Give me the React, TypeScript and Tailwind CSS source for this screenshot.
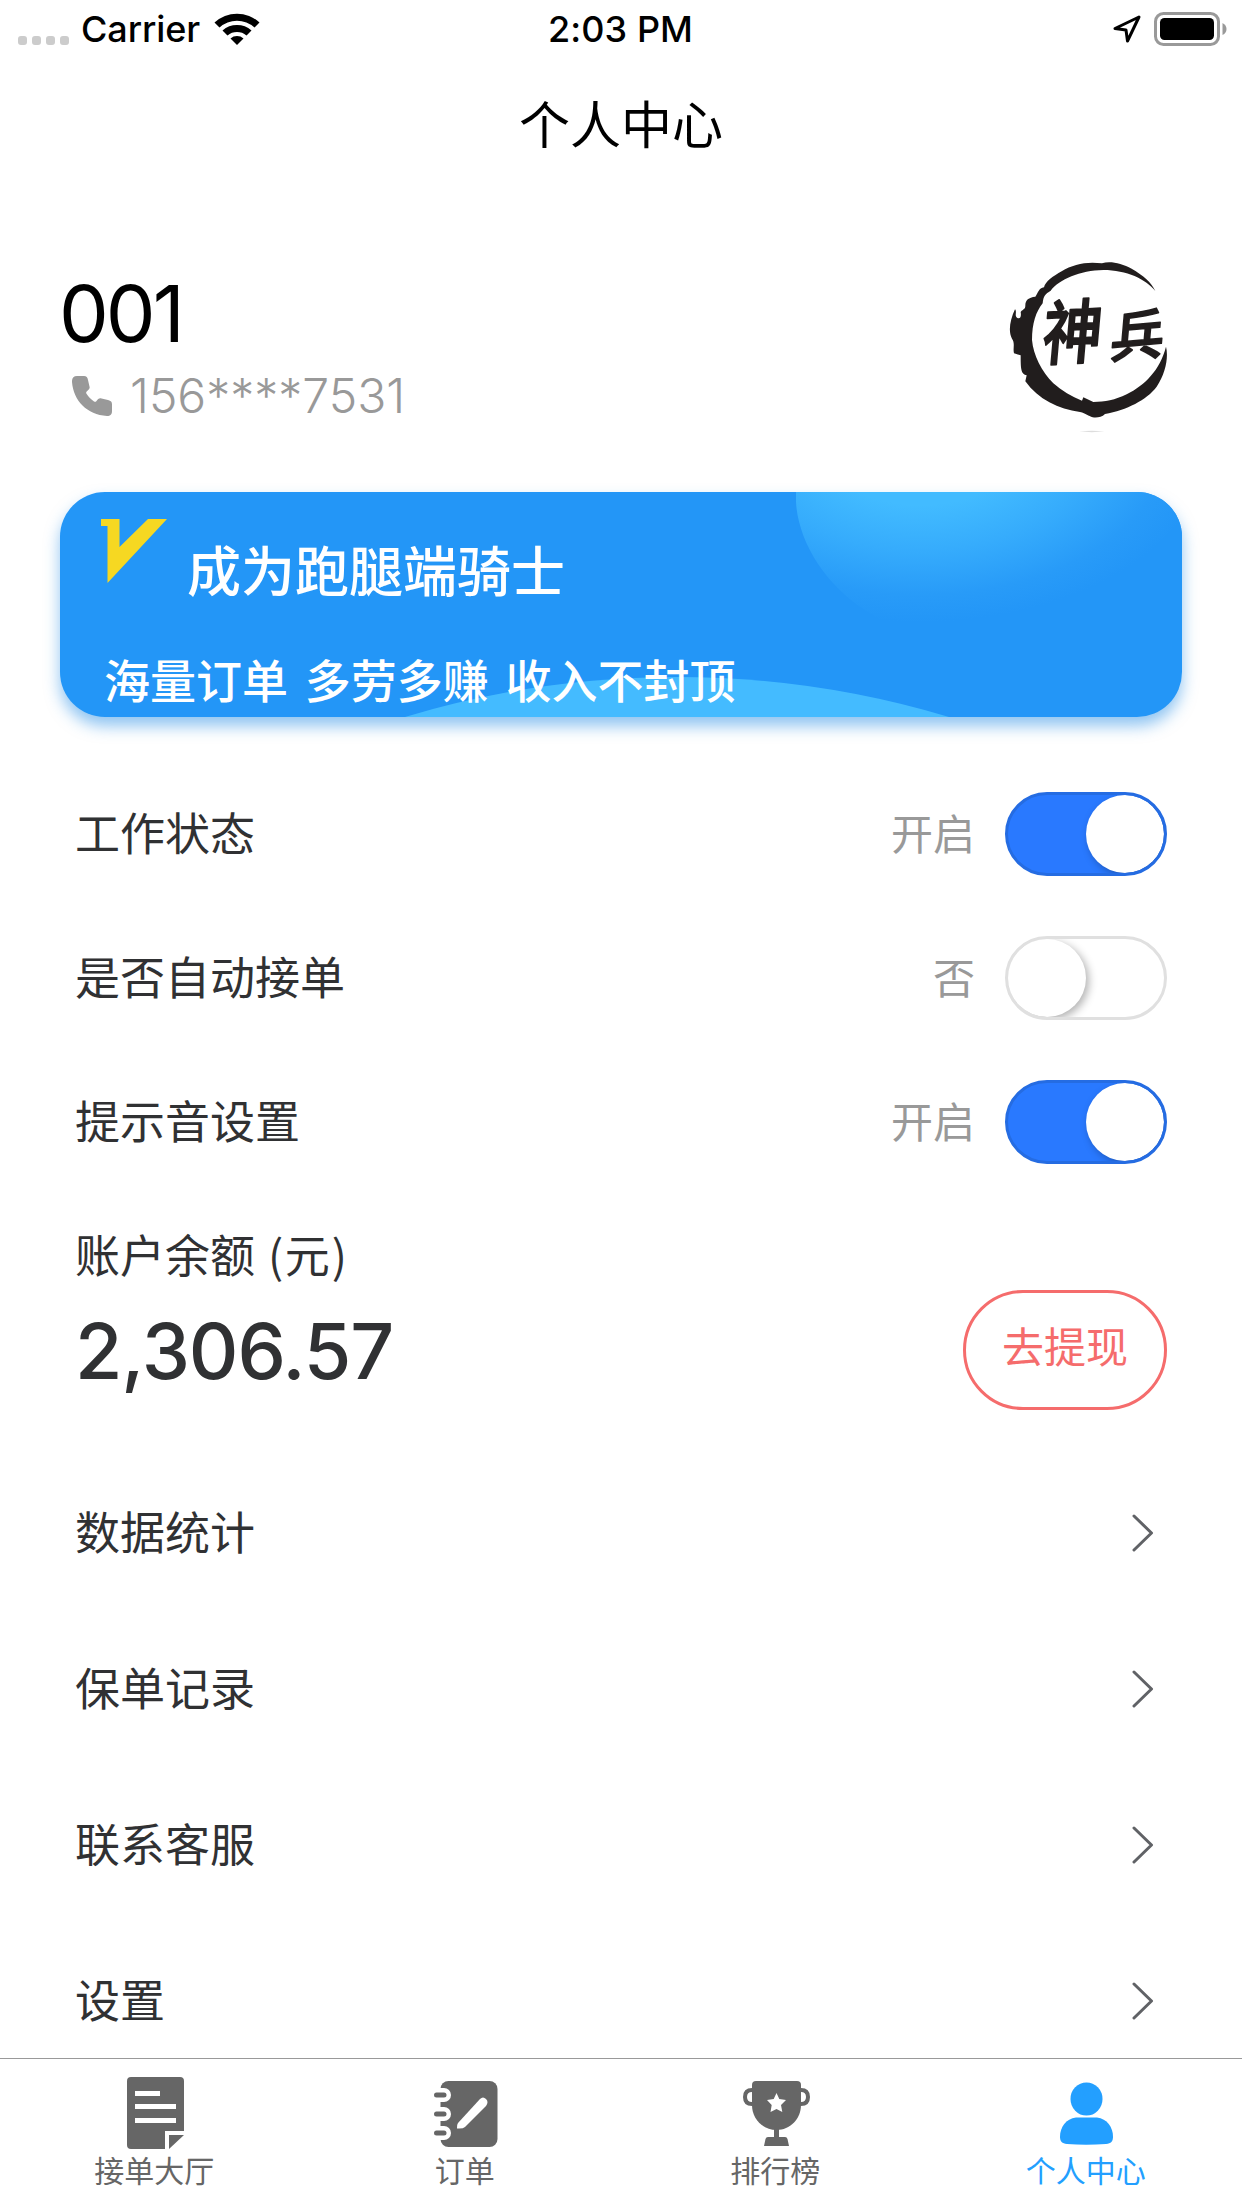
import React, { useState } from 'react';

const menuItems = ['数据统计', '保单记录', '联系客服', '设置'];

// Status bar icons
function WifiIcon() {
  return (
    <svg className="ml-[14px] h-[34px] w-[46px]" viewBox="0 0 46 34">
      <path d="M0.5 10.5 A33 33 0 0 1 45.5 10.5 L40.5 15.5 A26 26 0 0 0 5.5 15.5 Z" />
      <path d="M8.5 18.5 A22 22 0 0 1 37.5 18.5 L32.5 23.5 A15 15 0 0 0 13.5 23.5 Z" />
      <path d="M16.5 26.5 A10 10 0 0 1 29.5 26.5 L23 33 Z" />
    </svg>
  );
}

function StatusBar() {
  return (
    <div className="grid h-[58px] shrink-0 grid-cols-3 items-center pl-[18px] pr-[15px] text-[36px] font-medium leading-none text-black">
      <div className="flex items-center">
        <div className="mt-[23px] flex gap-[5px]">
          {[0, 1, 2, 3].map((i) => (
            <span key={i} className="h-[9px] w-[9px] rounded-[3px] bg-[#cccccc]" />
          ))}
        </div>
        <span className="ml-[12px] tracking-[-0.1px]">Carrier</span>
        <WifiIcon />
      </div>
      <div className="pr-[4px] text-center tracking-[0.1px]">2:03 PM</div>
      <div className="flex items-center justify-end gap-[12px]">
        <svg className="h-[30px] w-[30px]" viewBox="0 0 30 30" fill="none" stroke="#000" strokeWidth="3" strokeLinejoin="round">
          <path d="M27 3 L3 14.5 L14 16 L15.5 27 Z" />
        </svg>
        <svg className="h-[34px] w-[73px]" viewBox="0 0 73 34">
          <rect x="1.5" y="1.5" width="63" height="31" rx="8" fill="none" stroke="#999" strokeWidth="3" />
          <rect x="6" y="6" width="54" height="22" rx="4.5" fill="#000" />
          <path d="M68.5 11 Q72.5 13 72.5 17 Q72.5 21 68.5 23 Z" fill="#999" />
        </svg>
      </div>
    </div>
  );
}

function Avatar() {
  return (
    <svg className="h-[180px] w-[180px]" viewBox="60 45 540 540">
      <path
        fill="#211d1d"
        d="M526 153 C498 118 440 90 370 90 C300 91 238 118 212 152 C196 162 190 168 188 190 C168 215 156 250 156 300 C160 345 185 395 220 430 C245 452 275 470 306 482 L310 472 L340 486 C375 486 405 480 440 463 C495 435 540 390 558 320 C566 350 557 400 530 440 C500 480 440 510 375 522 C365 532 350 534 338 532 C325 528 318 520 300 516 C235 508 175 478 136 424 L140 406 C124 402 122 392 122 346 L102 340 C98 325 106 310 96 296 C84 275 90 240 105 208 C112 215 102 228 112 234 C122 238 124 228 122 216 C130 206 136 210 136 196 C136 180 146 172 166 170 C174 160 176 144 192 142 C196 124 220 108 245 94 C280 72 320 64 366 70 C390 62 425 70 455 86 C490 106 515 128 526 153 Z"
      />
      <g
        fill="#211d1d"
        stroke="#211d1d"
        strokeWidth="5"
        strokeLinejoin="round"
        fontFamily='"Noto Sans CJK SC", sans-serif'
        fontWeight="500"
        textAnchor="middle"
      >
        <text transform="translate(272 354) rotate(-3) skewX(-8) scale(1 1.17)" fontSize="178">神</text>
        <text transform="translate(468 347) rotate(-5) skewX(-10)" fontSize="162">兵</text>
      </g>
      <path d="M298 574 Q335 570 374 574 Q335 579 298 574 Z" fill="#ddd" />
    </svg>
  );
}

function Profile() {
  return (
    <div className="flex h-[302px] shrink-0 justify-between pl-[60px] pr-[62px]">
      <div className="pt-[78px]">
        <div className="-ml-px text-[79px] leading-[90px] tracking-[-3px] text-black">001</div>
        <div className="mt-[7px] flex items-center pl-[12px] text-[#999999]">
          <svg className="h-[40px] w-[40px]" viewBox="0 0 40 40" fill="currentColor">
            <path d="M5 0 H12 C14.5 0 15.5 1.5 16 4 L17.6 11 C18 13 16.500 14 14.5 15.700 C14 16.200 14 17 14.500 17.800 C16.500 21 19 23.500 22 25.500 C23 26 23.600 26 24.300 25.300 C26 23 27 22 29.500 22.500 L36 24 C39 24.700 40 26 40 28.500 V35 C40 38.500 38.500 40 35 40 C15 38.500 1.500 25 0 6 C-0.200 2 1.500 0 5 0 Z" />
          </svg>
          <span className="ml-[18px] pt-px text-[48px] font-light leading-[60px]">156****7531</span>
        </div>
      </div>
      <div className="pt-[65px]">
        <Avatar />
      </div>
    </div>
  );
}

function RiderBanner() {
  return (
    <div className="relative mx-[60px] h-[225px] shrink-0 rounded-[45px] bg-[#2396f7] text-white shadow-[0_9px_15px_rgba(34,139,230,0.5)]">
      <svg className="absolute inset-0 h-full w-full rounded-[45px]" viewBox="0 0 1122 225">
        <defs>
          <radialGradient id="glow" gradientUnits="userSpaceOnUse" cx="0" cy="0" r="1" gradientTransform="translate(860 -50) scale(290 180)">
            <stop offset="0.35" stopColor="#42bbff" />
            <stop offset="0.6" stopColor="#36acfc" />
            <stop offset="0.85" stopColor="#289bf8" />
            <stop offset="1" stopColor="#2396f7" />
          </radialGradient>
        </defs>
        <path d="M736 0 V10 C738 48 764 92 805 118 Q840 142 890 150 H1122 V0 Z" fill="url(#glow)" />
        <path d="M345 225 A945 945 0 0 1 889 225 Z" fill="#44bbff" />
      </svg>
      <div className="relative flex pl-[41px] pt-[27px]">
        <svg className="h-[64px] w-[66px]" viewBox="0 0 66 64">
          <path d="M0 0 H18.500 V28 L47 0 H66 L6.500 64 V7 H0 Z" fill="#f6d822" />
        </svg>
        <div className="ml-[20px] mt-[20px] text-[54px] font-medium leading-[68px]">成为跑腿端骑士</div>
      </div>
      <div className="relative pl-[44px] pt-[44px] text-[46px] font-medium leading-[60px] [word-spacing:4.5px]">
        海量订单 多劳多赚 收入不封顶
      </div>
    </div>
  );
}

interface SwitchRowProps {
  label: string;
  onText: string;
  offText: string;
  initial: boolean;
}

function SwitchRow({ label, onText, offText, initial }: SwitchRowProps) {
  const [checked, setChecked] = useState<boolean>(initial);

  return (
    <div className="flex h-[144px] shrink-0 items-center pl-[75px] pr-[75px]">
      <span className="flex-1 pt-px text-[45px] text-[#303133]">{label}</span>
      <span className="mr-[30px] text-[42px] text-[#999999]">{checked ? onText : offText}</span>
      <button
        onClick={() => setChecked(!checked)}
        className={`flex h-[84px] w-[162px] overflow-hidden rounded-full border-[3px] ${
          checked ? 'justify-end border-[#256ce2] bg-[#2979ff]' : 'justify-start border-[#e0e0e0] bg-white'
        }`}
      >
        <span className="h-[78px] w-[78px] rounded-full bg-white shadow-[3px_3px_8px_rgba(0,0,0,0.3)]" />
      </button>
    </div>
  );
}

function Balance() {
  return (
    <div className="flex h-[261px] shrink-0 items-start justify-between px-[75px] pt-[32px] text-[#303133]">
      <div>
        <div className="font-['Noto_Sans_CJK_SC',sans-serif] text-[45px] leading-[56px] [word-spacing:3px]">
          账户余额 <span className="mr-[1.5px]">(</span>元<span className="ml-[2px]">)</span>
        </div>
        <div className="mt-[24px] text-[77px] font-medium leading-[90px] tracking-[-1.1px]">2,306.57</div>
      </div>
      <button className="mt-[64px] h-[120px] w-[204px] rounded-full border-[3px] border-[#f56c6c] pb-[4px] text-[42px] leading-none text-[#f56c6c]">
        去提现
      </button>
    </div>
  );
}

function MenuRow({ label }: { label: string }) {
  return (
    <div className="flex h-[156px] shrink-0 items-center justify-between pl-[75px] pr-[88px] text-[45px] text-[#303133]">
      <span className="pt-px">{label}</span>
      <svg className="h-[40px] w-[22px]" viewBox="0 0 22 40" fill="none" stroke="#606266" strokeWidth="3" strokeLinecap="round" strokeLinejoin="round">
        <path d="M2 3 L19.500 20 L2 37" />
      </svg>
    </div>
  );
}

// Tab icons
function HallIcon() {
  return (
    <svg className="h-[72px] w-[57px]" viewBox="0 0 57 72" fill="currentColor">
      <path d="M4 0 H53 Q57 0 57 4 V54 H38 V72 H4 Q0 72 0 68 V4 Q0 0 4 0 Z M8 14 V19 H33 V14 Z M8 27 V32 H49 V27 Z M8 41 V46 H49 V41 Z" fillRule="evenodd" />
      <path d="M42 58 H57 L42 72 Z" />
    </svg>
  );
}

function OrderIcon() {
  return (
    <svg className="h-[72px] w-[64px]" viewBox="0 -4 64 72">
      <rect x="6.500" y="0" width="57" height="66" rx="8" fill="currentColor" />
      {[14, 33, 52].map((y) => (
        <g key={y}>
          <rect x="-4" y={y - 7} width="21" height="14" rx="7" fill="#fff" />
          <rect x="0" y={y - 2.5} width="12.500" height="5" rx="2.500" fill="currentColor" />
        </g>
      ))}
      <path d="M24 42 L46 18 Q49 15 52 18 Q55 21 52 25 L31 46 Q29 48 23 47.500 Q22.500 44 24 42 Z" fill="#fff" />
    </svg>
  );
}

function TrophyIcon() {
  return (
    <svg className="h-[72px] w-[67px]" viewBox="0 -4 67 72" fill="currentColor">
      <path d="M13 0 H54 Q58 0 58 4 V24 C58 38 47 49 33.500 49 C20 49 9 38 9 24 V4 Q9 0 13 0 Z" />
      <path d="M10 9 H9 Q2 9 2 16 Q2 23 9 23 H10 M57 9 H58 Q65 9 65 16 Q65 23 58 23 H57" fill="none" stroke="currentColor" strokeWidth="4" />
      <path d="M31 47 H36 V56 H42 Q44 56 44.500 58 L46 65 H21 L22.500 58 Q23 56 25 56 H31 Z" />
      <path d="M33.500 12 L36.300 18 L43 19 L38 24 L39.300 31 L33.500 28 L27.500 31 L28.700 24 L24 19 L30.700 18 Z" fill="#fff" />
    </svg>
  );
}

function UserIcon() {
  return (
    <svg className="h-[72px] w-[53px]" viewBox="0 -5.500 53 72" fill="currentColor">
      <ellipse cx="26.500" cy="16.500" rx="16" ry="16.500" />
      <path d="M16 35 H37 C47 36 53 45 53 54 C53 59 51 61 46 61.500 Q26 63 7 61.500 C2 61 0 59 0 54 C0 45 6 36 16 35 Z" />
    </svg>
  );
}

const tabs = [
  { label: '接单大厅', icon: <HallIcon /> },
  { label: '订单', icon: <OrderIcon /> },
  { label: '排行榜', icon: <TrophyIcon /> },
  { label: '个人中心', icon: <UserIcon /> },
];

function App() {
  const [active, setActive] = useState<number>(3);

  return (
    <div className="flex h-[2208px] w-[1242px] flex-col overflow-hidden bg-white font-['Inter','Noto_Sans_CJK_SC',sans-serif]">
      <StatusBar />

      {/* Main Content */}
      <main className="flex min-h-0 flex-1 flex-col overflow-hidden">
        <h1 className="h-[132px] shrink-0 text-center text-[51px] leading-[136px] text-black">个人中心</h1>
        <Profile />
        <RiderBanner />

        <div className="mt-[45px] shrink-0">
          <SwitchRow label="工作状态" onText="开启" offText="关闭" initial={true} />
          <SwitchRow label="是否自动接单" onText="是" offText="否" initial={false} />
          <SwitchRow label="提示音设置" onText="开启" offText="关闭" initial={true} />
        </div>

        <Balance />

        {menuItems.map((item) => (
          <MenuRow key={item} label={item} />
        ))}
      </main>

      {/* Tab Bar */}
      <nav className="grid h-[150px] shrink-0 grid-cols-4 border-t border-[#999999] bg-white">
        {tabs.map((tab, i) => (
          <button
            key={tab.label}
            onClick={() => setActive(i)}
            className={`flex flex-col items-center pt-[18px] ${active === i ? 'text-[#239fff]' : 'text-[#666666]'}`}
          >
            {tab.icon}
            <span className="mt-[4px] pr-[2px] text-[30px] leading-[36px]">{tab.label}</span>
          </button>
        ))}
      </nav>
    </div>
  );
}

export default App;
